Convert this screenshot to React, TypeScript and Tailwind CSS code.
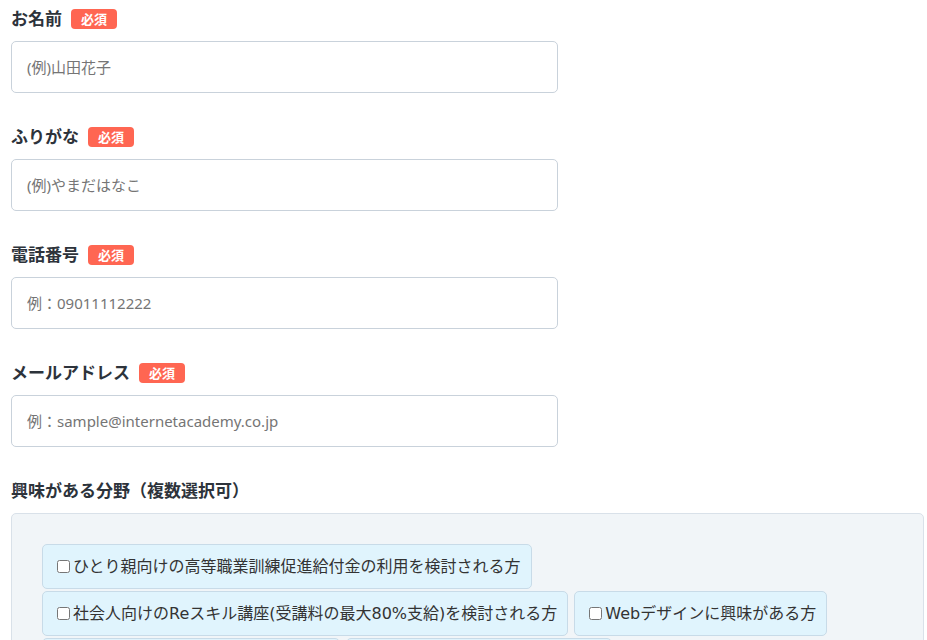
import React from 'react';

const fields = [
  { label: 'お名前', placeholder: '(例)山田花子', type: 'text' },
  { label: 'ふりがな', placeholder: '(例)やまだはなこ', type: 'text' },
  { label: '電話番号', placeholder: '例：09011112222', type: 'tel' },
  { label: 'メールアドレス', placeholder: '例：sample@internetacademy.co.jp', type: 'email' },
];

const interests = [
  'ひとり親向けの高等職業訓練促進給付金の利用を検討される方',
  '社会人向けのReスキル講座(受講料の最大80%支給)を検討される方',
  'Webデザインに興味がある方',
  'プログラミング学習に興味がある方',
  'AI・データ分析に興味がある方',
];

function Badge() {
  return (
    <span className="ml-[9px] inline-flex h-[20px] w-[46px] items-center justify-center rounded-[4px] bg-[#ff6652] text-[13px] font-bold leading-none text-white">
      必須
    </span>
  );
}

export default function App() {
  return (
    <div className="min-h-screen bg-white pl-[11px] pr-[3px] pt-[8px] font-['Noto_Sans','Noto_Sans_CJK_JP',sans-serif] text-[#333]">
      {fields.map((f) => (
        <div key={f.label} className="mb-[33px]">
          <div className="mb-[11px] flex h-[22px] items-center">
            <span className="text-[17px] font-bold leading-[22px] text-[#2d333b]">{f.label}</span>
            <Badge />
          </div>
          <input
            type={f.type}
            placeholder={f.placeholder}
            className="block h-[52px] w-[547px] rounded-[5px] border border-[#c9d2db] bg-white px-[15px] text-[15px] text-[#333] outline-none placeholder:text-[#757575]"
          />
        </div>
      ))}

      <div className="mb-[11px] flex h-[22px] items-center">
        <span className="text-[17px] font-bold leading-[22px] text-[#2d333b]">興味がある分野（複数選択可）</span>
      </div>
      <div className="w-[913px] rounded-[5px] border border-[#d9e1e9] bg-[#f1f5f8] px-[30px] pb-[30px] pt-[30px]">
        <div className="flex flex-wrap gap-x-[6px] gap-y-[2px]">
          {interests.map((t) => (
            <label
              key={t}
              className="flex h-[45px] items-center rounded-[5px] border border-[#c8dbe8] bg-[#e0f4fd] pl-[14px] pr-[10px] font-['DejaVu_Sans','Noto_Sans_CJK_JP',sans-serif] text-[16px] leading-none text-[#333]"
            >
              <input type="checkbox" className="m-0 mr-[3px] h-[13px] w-[13px]" />
              {t}
            </label>
          ))}
        </div>
      </div>
    </div>
  );
}
